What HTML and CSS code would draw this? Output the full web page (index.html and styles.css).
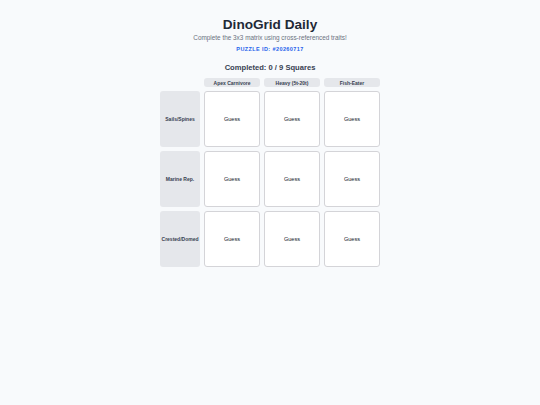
FILE: index.html
```html
<!DOCTYPE html>
<html lang="en">
<head>
<meta charset="utf-8">
<title>DinoGrid Daily</title>
<link rel="stylesheet" href="styles.css">
</head>
<body>
<main class="app">
  <h1 class="title">DinoGrid Daily</h1>
  <p class="subtitle">Complete the 3x3 matrix using cross-referenced traits!</p>
  <p class="puzzle-id">Puzzle ID: #20260717</p>
  <p class="progress">Completed: 0 / 9 Squares</p>
  <div class="grid">
    <div class="corner"></div>
    <div class="col-head">Apex Carnivore</div>
    <div class="col-head">Heavy (5t-20t)</div>
    <div class="col-head">Fish-Eater</div>

    <div class="row-head">Sails/Spines</div>
    <button class="cell">Guess</button>
    <button class="cell">Guess</button>
    <button class="cell">Guess</button>

    <div class="row-head">Marine Rep.</div>
    <button class="cell">Guess</button>
    <button class="cell">Guess</button>
    <button class="cell">Guess</button>

    <div class="row-head">Crested/Domed</div>
    <button class="cell">Guess</button>
    <button class="cell">Guess</button>
    <button class="cell">Guess</button>
  </div>
</main>
</body>
</html>
```
FILE: styles.css
```css
* { box-sizing: border-box; }
html, body {
  margin: 0;
  padding: 0;
  background: #f8fafc;
  font-family: "Liberation Sans", Arial, Helvetica, sans-serif;
  color: #1f2937;
}
.app {
  display: flex;
  flex-direction: column;
  align-items: center;
  padding-top: 16px;
}
.title {
  margin: 0;
  font-size: 13.6px;
  line-height: 17px;
  font-weight: 700;
  color: #1f2937;
}
.subtitle {
  margin: 1px 0 0;
  font-size: 6.4px;
  line-height: 8px;
  color: #6b7280;
}
.puzzle-id {
  margin: 3px 0 0;
  font-size: 5.5px;
  line-height: 8px;
  font-weight: 700;
  letter-spacing: 0.4px;
  text-transform: uppercase;
  color: #2563eb;
}
.progress {
  margin: 10px 0 0;
  font-size: 7.6px;
  line-height: 10px;
  font-weight: 700;
  color: #374151;
}
.grid {
  margin-top: 5px;
  display: grid;
  grid-template-columns: 40px repeat(3, 56px);
  grid-template-rows: 9px repeat(3, 56px);
  gap: 4px;
}
.col-head {
  background: #e5e7eb;
  border-radius: 3px;
  font-size: 5px;
  font-weight: 700;
  color: #374151;
  display: flex;
  align-items: center;
  justify-content: center;
}
.row-head {
  background: #e5e7eb;
  border-radius: 3px;
  font-size: 5px;
  font-weight: 700;
  color: #374151;
  display: flex;
  align-items: center;
  justify-content: center;
  text-align: center;
}
.cell {
  margin: 0;
  padding: 0;
  background: #ffffff;
  border: 1px solid #d4d4d8;
  border-radius: 3px;
  font-family: inherit;
  font-size: 5.6px;
  color: #111827;
  display: flex;
  align-items: center;
  justify-content: center;
  cursor: pointer;
}
```
